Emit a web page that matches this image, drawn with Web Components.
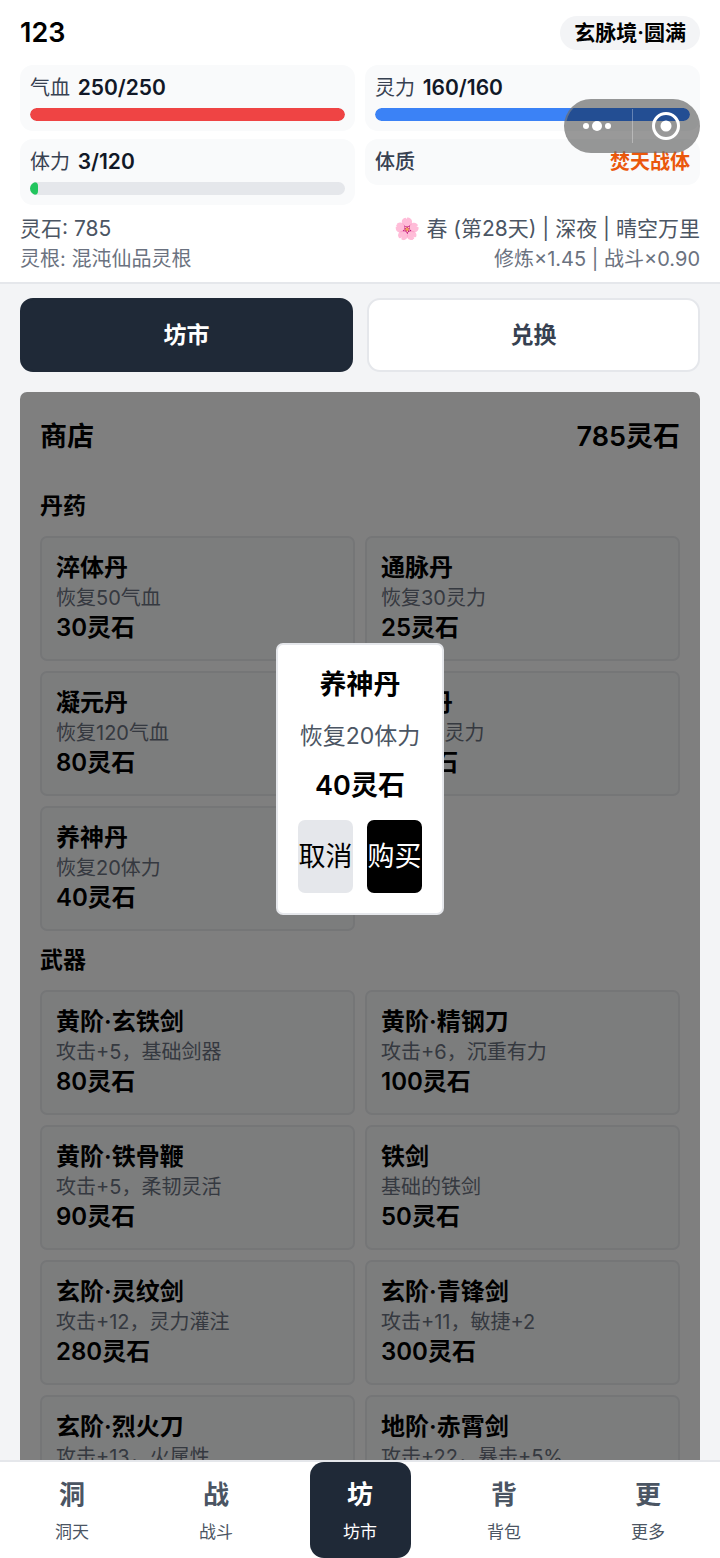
<!DOCTYPE html>
<html lang="zh-CN">
<head>
<meta charset="utf-8">
<meta name="viewport" content="width=device-width, initial-scale=1">
<title>坊市</title>
<style>
  body {
    background: #f3f4f6;
    color: #000000;
    display: flex;
    flex-direction: column;
    font-family: Inter, 'Noto Sans CJK SC', sans-serif;
    font-size: 20px;
    height: 100vh;
    line-height: 30px;
    margin: 0;
  }

  main {
    display: flex;
    flex: 1;
    flex-direction: column;
    gap: 20px;
    min-height: 0;
    overflow-y: auto;
    padding: 14px 20px 0 20px;
    scrollbar-width: none;
  }
</style>
</head>
<body>

<game-header name="123" realm="玄脉境·圆满">
  <game-stat label="气血" value="250" max="250" color="#ef4444"></game-stat>
  <game-stat label="灵力" value="160" max="160" color="#3b82f6"></game-stat>
  <game-stat label="体力" value="3" max="120" color="#22c55e"></game-stat>
  <game-trait label="体质">焚天战体</game-trait>
  <span slot="stones">灵石: 785</span>
  <span slot="season">🌸 春 (第28天) | 深夜 | 晴空万里</span>
  <span slot="root">灵根: 混沌仙品灵根</span>
  <span slot="bonus">修炼×1.45 | 战斗×0.90</span>
</game-header>

<main>
  <game-tabs>
    <game-tab selected>坊市</game-tab>
    <game-tab>兑换</game-tab>
  </game-tabs>
  <shop-panel heading="商店" balance="785灵石">
    <shop-section heading="丹药">
      <shop-item name="淬体丹" price="30灵石">恢复50气血</shop-item>
      <shop-item name="通脉丹" price="25灵石">恢复30灵力</shop-item>
      <shop-item name="凝元丹" price="80灵石">恢复120气血</shop-item>
      <shop-item name="聚灵丹" price="70灵石">恢复70灵力</shop-item>
      <shop-item name="养神丹" price="40灵石">恢复20体力</shop-item>
    </shop-section>
    <shop-section heading="武器">
      <shop-item name="黄阶·玄铁剑" price="80灵石">攻击+5，基础剑器</shop-item>
      <shop-item name="黄阶·精钢刀" price="100灵石">攻击+6，沉重有力</shop-item>
      <shop-item name="黄阶·铁骨鞭" price="90灵石">攻击+5，柔韧灵活</shop-item>
      <shop-item name="铁剑" price="50灵石">基础的铁剑</shop-item>
      <shop-item name="玄阶·灵纹剑" price="280灵石">攻击+12，灵力灌注</shop-item>
      <shop-item name="玄阶·青锋剑" price="300灵石">攻击+11，敏捷+2</shop-item>
      <shop-item name="玄阶·烈火刀" price="320灵石">攻击+13，火属性</shop-item>
      <shop-item name="地阶·赤霄剑" price="800灵石">攻击+22，暴击+5%</shop-item>
    </shop-section>
  </shop-panel>
</main>

<game-nav>
  <game-nav-item icon="洞">洞天</game-nav-item>
  <game-nav-item icon="战">战斗</game-nav-item>
  <game-nav-item icon="坊" selected>坊市</game-nav-item>
  <game-nav-item icon="背">背包</game-nav-item>
  <game-nav-item icon="更">更多</game-nav-item>
</game-nav>

<buy-dialog name="养神丹" price="40灵石">恢复20体力</buy-dialog>
<mini-capsule></mini-capsule>

<script>
// Shared setup
// Attributes are copied into [data-attr] elements
class GameElement extends HTMLElement {
  constructor() {
    super();

    const template = document.createElement( 'template' );
    template.innerHTML = this.constructor.template;

    this.attachShadow( {mode: 'open'} );
    this.shadowRoot.appendChild( template.content.cloneNode( true ) );
  }

  connectedCallback() {
    this._render();
  }

  _render() {
    this.shadowRoot.querySelectorAll( '[data-attr]' ).forEach( ( element ) => {
      element.textContent = this.getAttribute( element.dataset.attr );
    } );
  }
}

class GameHeader extends GameElement {
  static template = /* template */ `
    <style>
      :host {
        background: #ffffff;
        border-bottom: 2px solid #e5e7eb;
        display: block;
        padding: 16px 20px 8px 20px;
      }

      .title {
        align-items: center;
        display: flex;
        justify-content: space-between;
        margin-bottom: 15px;
      }

      h1 {
        font-size: 27px;
        font-weight: 600;
        line-height: 34px;
        margin: 0;
      }

      .realm {
        background: #f3f4f6;
        border-radius: 17px;
        font-size: 21px;
        font-weight: 600;
        line-height: 34px;
        padding: 0 14px;
      }

      .stats {
        align-items: start;
        display: grid;
        gap: 8px 10px;
        grid-template-columns: 1fr 1fr;
        margin-bottom: 9px;
      }

      .row {
        color: #4b5563;
        display: flex;
        font-size: 21px;
        justify-content: space-between;
      }

      .row.minor {
        color: #6b7280;
        font-size: 20px;
      }
    </style>
    <div class="title">
      <h1 data-attr="name"></h1>
      <span class="realm" data-attr="realm"></span>
    </div>
    <div class="stats"><slot></slot></div>
    <div class="row"><slot name="stones"></slot><slot name="season"></slot></div>
    <div class="row minor"><slot name="root"></slot><slot name="bonus"></slot></div>
  `;
}

class GameStat extends GameElement {
  static template = /* template */ `
    <style>
      :host {
        background: #f9fafb;
        border-radius: 13px;
        display: block;
        line-height: 28px;
        padding: 9px 10px 10px 10px;
      }

      .label {
        color: #374151;
      }

      .value {
        color: #111827;
        font-size: 21px;
        font-weight: 600;
        margin-left: 2px;
      }

      .track {
        background: #e5e7eb;
        border-radius: 7px;
        height: 13px;
        margin-top: 6px;
        overflow: hidden;
      }

      .fill {
        border-radius: 7px;
        height: 100%;
      }
    </style>
    <div><span class="label" data-attr="label"></span> <span class="value"></span></div>
    <div class="track"><div class="fill"></div></div>
  `;

  _render() {
    super._render();

    const value = this.getAttribute( 'value' );
    const max = this.getAttribute( 'max' );
    const fill = this.shadowRoot.querySelector( '.fill' );

    this.shadowRoot.querySelector( '.value' ).textContent = `${value}/${max}`;
    fill.style.width = `${value / max * 100}%`;
    fill.style.background = this.getAttribute( 'color' );
  }
}

class GameTrait extends GameElement {
  static template = /* template */ `
    <style>
      :host {
        background: #f9fafb;
        border-radius: 13px;
        color: #374151;
        display: flex;
        font-weight: 500;
        justify-content: space-between;
        line-height: 28px;
        padding: 9px 10px;
      }

      .value {
        color: #ea580c;
        font-weight: 600;
      }
    </style>
    <span data-attr="label"></span>
    <span class="value"><slot></slot></span>
  `;
}

class GameTabs extends GameElement {
  static template = /* template */ `
    <style>
      :host {
        display: grid;
        flex-shrink: 0;
        gap: 14px;
        grid-template-columns: 1fr 1fr;
      }
    </style>
    <slot></slot>
  `;
}

class GameTab extends GameElement {
  static template = /* template */ `
    <style>
      :host {
        display: block;
      }

      button {
        background: #ffffff;
        border: 2px solid #e5e7eb;
        border-radius: 13px;
        box-sizing: border-box;
        color: #374151;
        cursor: pointer;
        display: block;
        font: inherit;
        font-size: 23px;
        font-weight: 600;
        height: 74px;
        padding: 0;
        width: 100%;
      }

      :host( [selected] ) button {
        background: #1f2937;
        border-color: #1f2937;
        color: #ffffff;
      }
    </style>
    <button type="button"><slot></slot></button>
  `;
}

class ShopPanel extends GameElement {
  static template = /* template */ `
    <style>
      :host {
        background: #ffffff;
        border-radius: 7px 7px 0 0;
        display: block;
        flex-shrink: 0;
        overflow: hidden;
        padding: 20px;
        position: relative;
      }

      header {
        display: flex;
        font-size: 27px;
        font-weight: 600;
        justify-content: space-between;
        line-height: 50px;
        margin-bottom: 15px;
      }

      h2 {
        font: inherit;
        margin: 0;
      }

      .shade {
        background: rgba( 0, 0, 0, 0.5 );
        inset: 0;
        position: absolute;
      }
    </style>
    <header>
      <h2 data-attr="heading"></h2>
      <span data-attr="balance"></span>
    </header>
    <slot></slot>
    <div class="shade"></div>
  `;
}

class ShopSection extends GameElement {
  static template = /* template */ `
    <style>
      :host {
        display: block;
        padding-top: 14px;
      }

      h3 {
        font-size: 23px;
        font-weight: 600;
        line-height: 30px;
        margin: 0 0 15px 0;
      }

      .items {
        display: grid;
        gap: 10px;
        grid-template-columns: 1fr 1fr;
      }
    </style>
    <h3 data-attr="heading"></h3>
    <div class="items"><slot></slot></div>
  `;
}

class ShopItem extends GameElement {
  static template = /* template */ `
    <style>
      :host {
        background: #f9fafb;
        border: 2px solid #eaecef;
        border-radius: 7px;
        display: block;
        padding: 15px 14px 16px 14px;
      }

      .name,
      .price {
        font-size: 24px;
        font-weight: 600;
      }

      .text {
        color: #6b7280;
      }
    </style>
    <div class="name" data-attr="name"></div>
    <div class="text"><slot></slot></div>
    <div class="price" data-attr="price"></div>
  `;
}

class GameNav extends GameElement {
  static template = /* template */ `
    <style>
      :host {
        background: #ffffff;
        border-top: 2px solid #e5e7eb;
        display: block;
      }

      nav {
        display: grid;
        grid-template-columns: repeat( 5, 1fr );
        justify-items: center;
      }
    </style>
    <nav><slot></slot></nav>
  `;
}

class GameNavItem extends GameElement {
  static template = /* template */ `
    <style>
      :host {
        display: block;
      }

      button {
        align-items: center;
        background: none;
        border: none;
        border-radius: 14px;
        color: #4b5563;
        cursor: pointer;
        display: flex;
        flex-direction: column;
        font: inherit;
        gap: 6px;
        padding: 14px 0;
        width: 101px;
      }

      .icon {
        font-size: 26px;
        font-weight: 600;
        line-height: 38px;
      }

      .label {
        font-size: 17px;
        line-height: 24px;
      }

      :host( [selected] ) button {
        background: #1f2937;
        color: #ffffff;
      }
    </style>
    <button type="button">
      <span class="icon" data-attr="icon"></span>
      <span class="label"><slot></slot></span>
    </button>
  `;
}

class BuyDialog extends GameElement {
  static template = /* template */ `
    <style>
      :host {
        display: grid;
        inset: 0;
        place-items: center;
        position: fixed;
      }

      dialog {
        background: #ffffff;
        border: 2px solid #e5e7eb;
        border-radius: 7px;
        box-sizing: border-box;
        color: inherit;
        display: flex;
        flex-direction: column;
        margin: 0;
        min-width: 168px;
        padding: 20px;
        position: static;
        text-align: center;
      }

      h2,
      .price {
        font-size: 27px;
        font-weight: 600;
        line-height: 40px;
        margin: 0;
      }

      p {
        color: #4b5563;
        font-size: 23px;
        line-height: 36px;
        margin: 13px 0 12px 0;
      }

      .actions {
        display: grid;
        gap: 14px;
        grid-template-columns: 1fr 1fr;
        margin-top: 14px;
      }

      button {
        background: #e5e7eb;
        border: none;
        border-radius: 7px;
        color: #000000;
        cursor: pointer;
        font: inherit;
        font-size: 27px;
        height: 73px;
        padding: 0;
        white-space: nowrap;
      }

      .buy {
        background: #000000;
        color: #ffffff;
      }
    </style>
    <dialog open>
      <h2 data-attr="name"></h2>
      <p><slot></slot></p>
      <div class="price" data-attr="price"></div>
      <div class="actions">
        <button type="button">取消</button>
        <button class="buy" type="button">购买</button>
      </div>
    </dialog>
  `;
}

class MiniCapsule extends GameElement {
  static template = /* template */ `
    <style>
      :host {
        background: rgba( 0, 0, 0, 0.4 );
        border: 2px solid rgba( 150, 150, 150, 0.5 );
        border-radius: 27px;
        box-sizing: border-box;
        display: grid;
        grid-template-columns: 1fr 1fr;
        height: 54px;
        position: fixed;
        right: 20px;
        top: 99px;
        width: 136px;
      }

      button {
        align-items: center;
        background: none;
        border: none;
        display: flex;
        justify-content: center;
        padding: 0;
      }

      svg {
        display: block;
      }

      button + button {
        background: linear-gradient( rgba( 255, 255, 255, 0.3 ), rgba( 255, 255, 255, 0.3 ) ) left center / 1px 34px no-repeat;
      }
    </style>
    <button type="button" aria-label="更多">
      <svg width="34" height="30" viewBox="0 0 34 30" fill="#ffffff">
        <circle cx="4" cy="15" r="3"/>
        <circle cx="15" cy="15" r="5"/>
        <circle cx="26" cy="15" r="3"/>
      </svg>
    </button>
    <button type="button" aria-label="关闭">
      <svg width="32" height="30" viewBox="0 0 32 30">
        <circle cx="17" cy="15" r="12.5" fill="none" stroke="#ffffff" stroke-width="3"/>
        <circle cx="17" cy="15" r="5.5" fill="#ffffff"/>
      </svg>
    </button>
  `;
}

window.customElements.define( 'game-header', GameHeader );
window.customElements.define( 'game-stat', GameStat );
window.customElements.define( 'game-trait', GameTrait );
window.customElements.define( 'game-tabs', GameTabs );
window.customElements.define( 'game-tab', GameTab );
window.customElements.define( 'shop-panel', ShopPanel );
window.customElements.define( 'shop-section', ShopSection );
window.customElements.define( 'shop-item', ShopItem );
window.customElements.define( 'game-nav', GameNav );
window.customElements.define( 'game-nav-item', GameNavItem );
window.customElements.define( 'buy-dialog', BuyDialog );
window.customElements.define( 'mini-capsule', MiniCapsule );
</script>
</body>
</html>
